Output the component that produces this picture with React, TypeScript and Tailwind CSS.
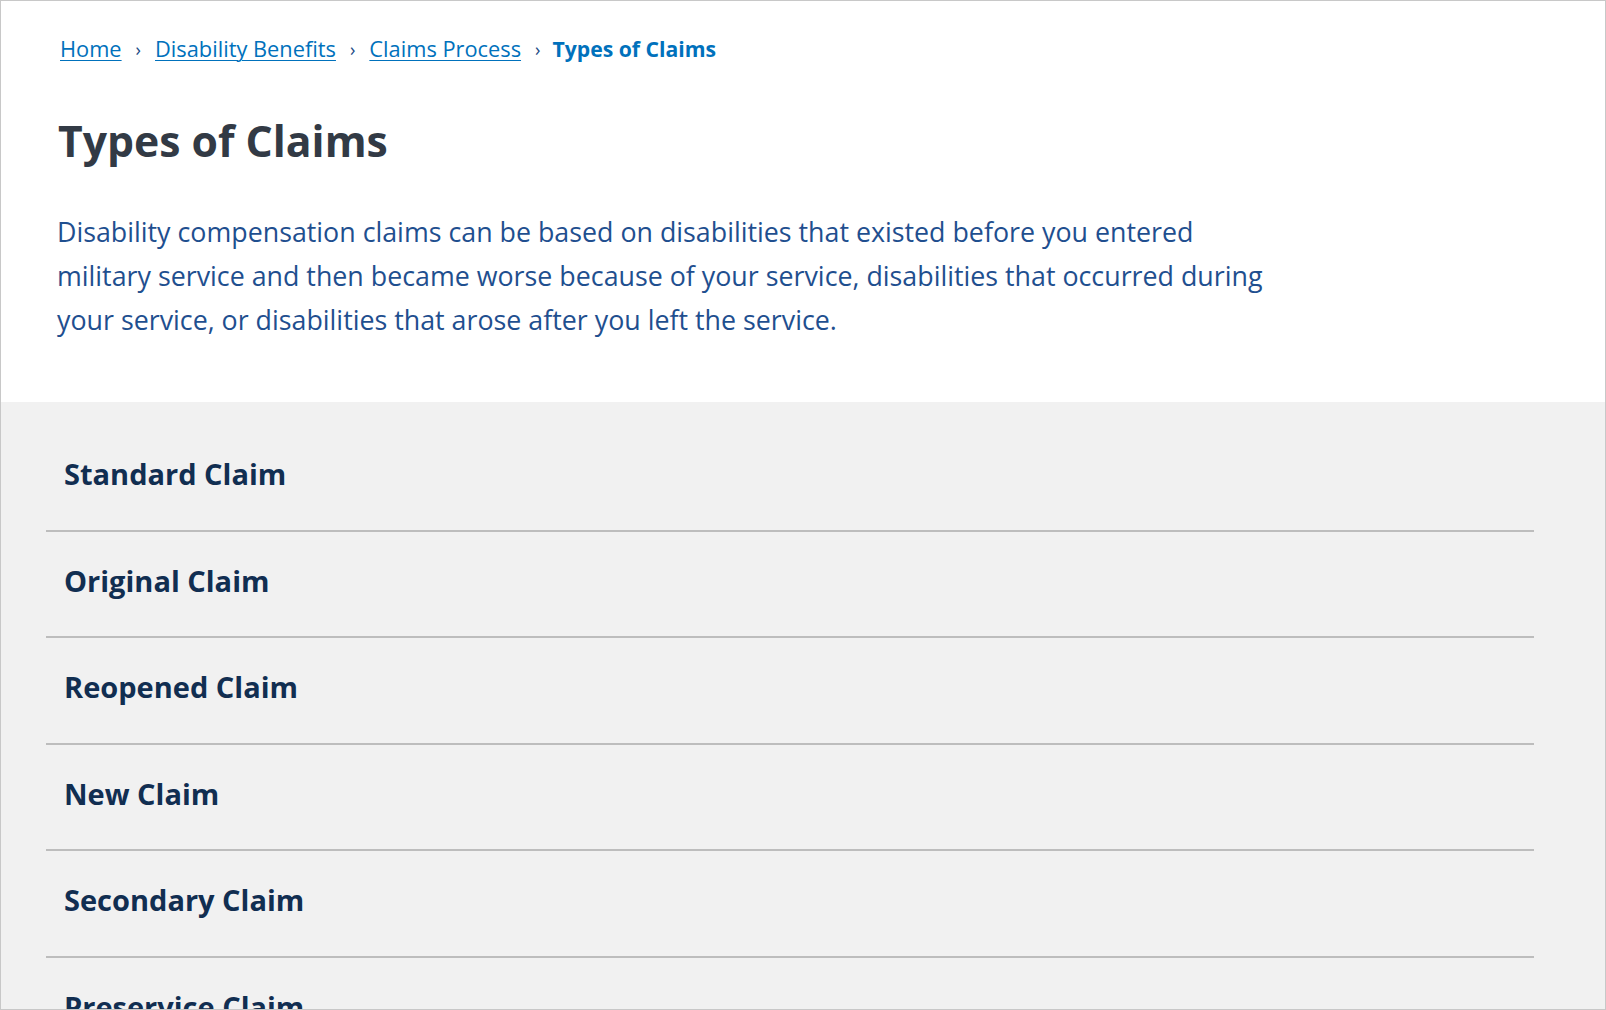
import React from 'react';

const crumbs = [
  { label: 'Home', href: '#' },
  { label: 'Disability Benefits', href: '#' },
  { label: 'Claims Process', href: '#' },
];

const claimTypes = [
  'Standard Claim',
  'Original Claim',
  'Reopened Claim',
  'New Claim',
  'Secondary Claim',
  'Preservice Claim',
  'Increased Claim',
];

const Breadcrumbs: React.FC = () => (
  <nav aria-label="Breadcrumb" className="ml-[3px] flex items-center text-[21.8px] leading-[32px]">
    {crumbs.map((c, i) => (
      <React.Fragment key={c.label}>
        <a href={c.href} className="text-[#0071bc] underline decoration-1 underline-offset-[3px]">
          {c.label}
        </a>
        <span className={i === crumbs.length - 1 ? 'ml-[14px] mr-[12px] text-[18px] text-[#1b4a85]' : 'mx-[14px] text-[18px] text-[#1b4a85]'}>›</span>
      </React.Fragment>
    ))}
    <span className="text-[21.2px] font-bold text-[#0071bc]">Types of Claims</span>
  </nav>
);

export default function App() {
  return (
    <div className="h-[1010px] w-full overflow-hidden border border-[#c8c8c8] bg-white font-['Open_Sans',sans-serif]">
      <div className="px-[56px] pb-[60px] pt-[32px]">
        <Breadcrumbs />
        <h1 className="ml-px mt-[50px] text-[42.7px] font-bold leading-[52px] text-[#323a45]">Types of Claims</h1>
        <p className="mt-[43px] text-[26.8px] leading-[44px] text-[#1f4f8f]">
          Disability compensation claims can be based on disabilities that existed before you entered
          <br />
          military service and then became worse because of your service, disabilities that occurred during
          <br />
          your service, or disabilities that arose after you left the service.
        </p>
      </div>

      <div className="bg-[#f1f1f1] pl-[45px] pr-[71px] pt-[23px]">
        <ul>
          {claimTypes.map((name) => (
            <li key={name} className="border-b-2 border-[#bdbdbd] pb-[37.5px] pl-[18px] pt-[31px]">
              <h2 className="text-[29px] font-bold leading-[36px] text-[#112e51]">{name}</h2>
            </li>
          ))}
        </ul>
      </div>
    </div>
  );
}
